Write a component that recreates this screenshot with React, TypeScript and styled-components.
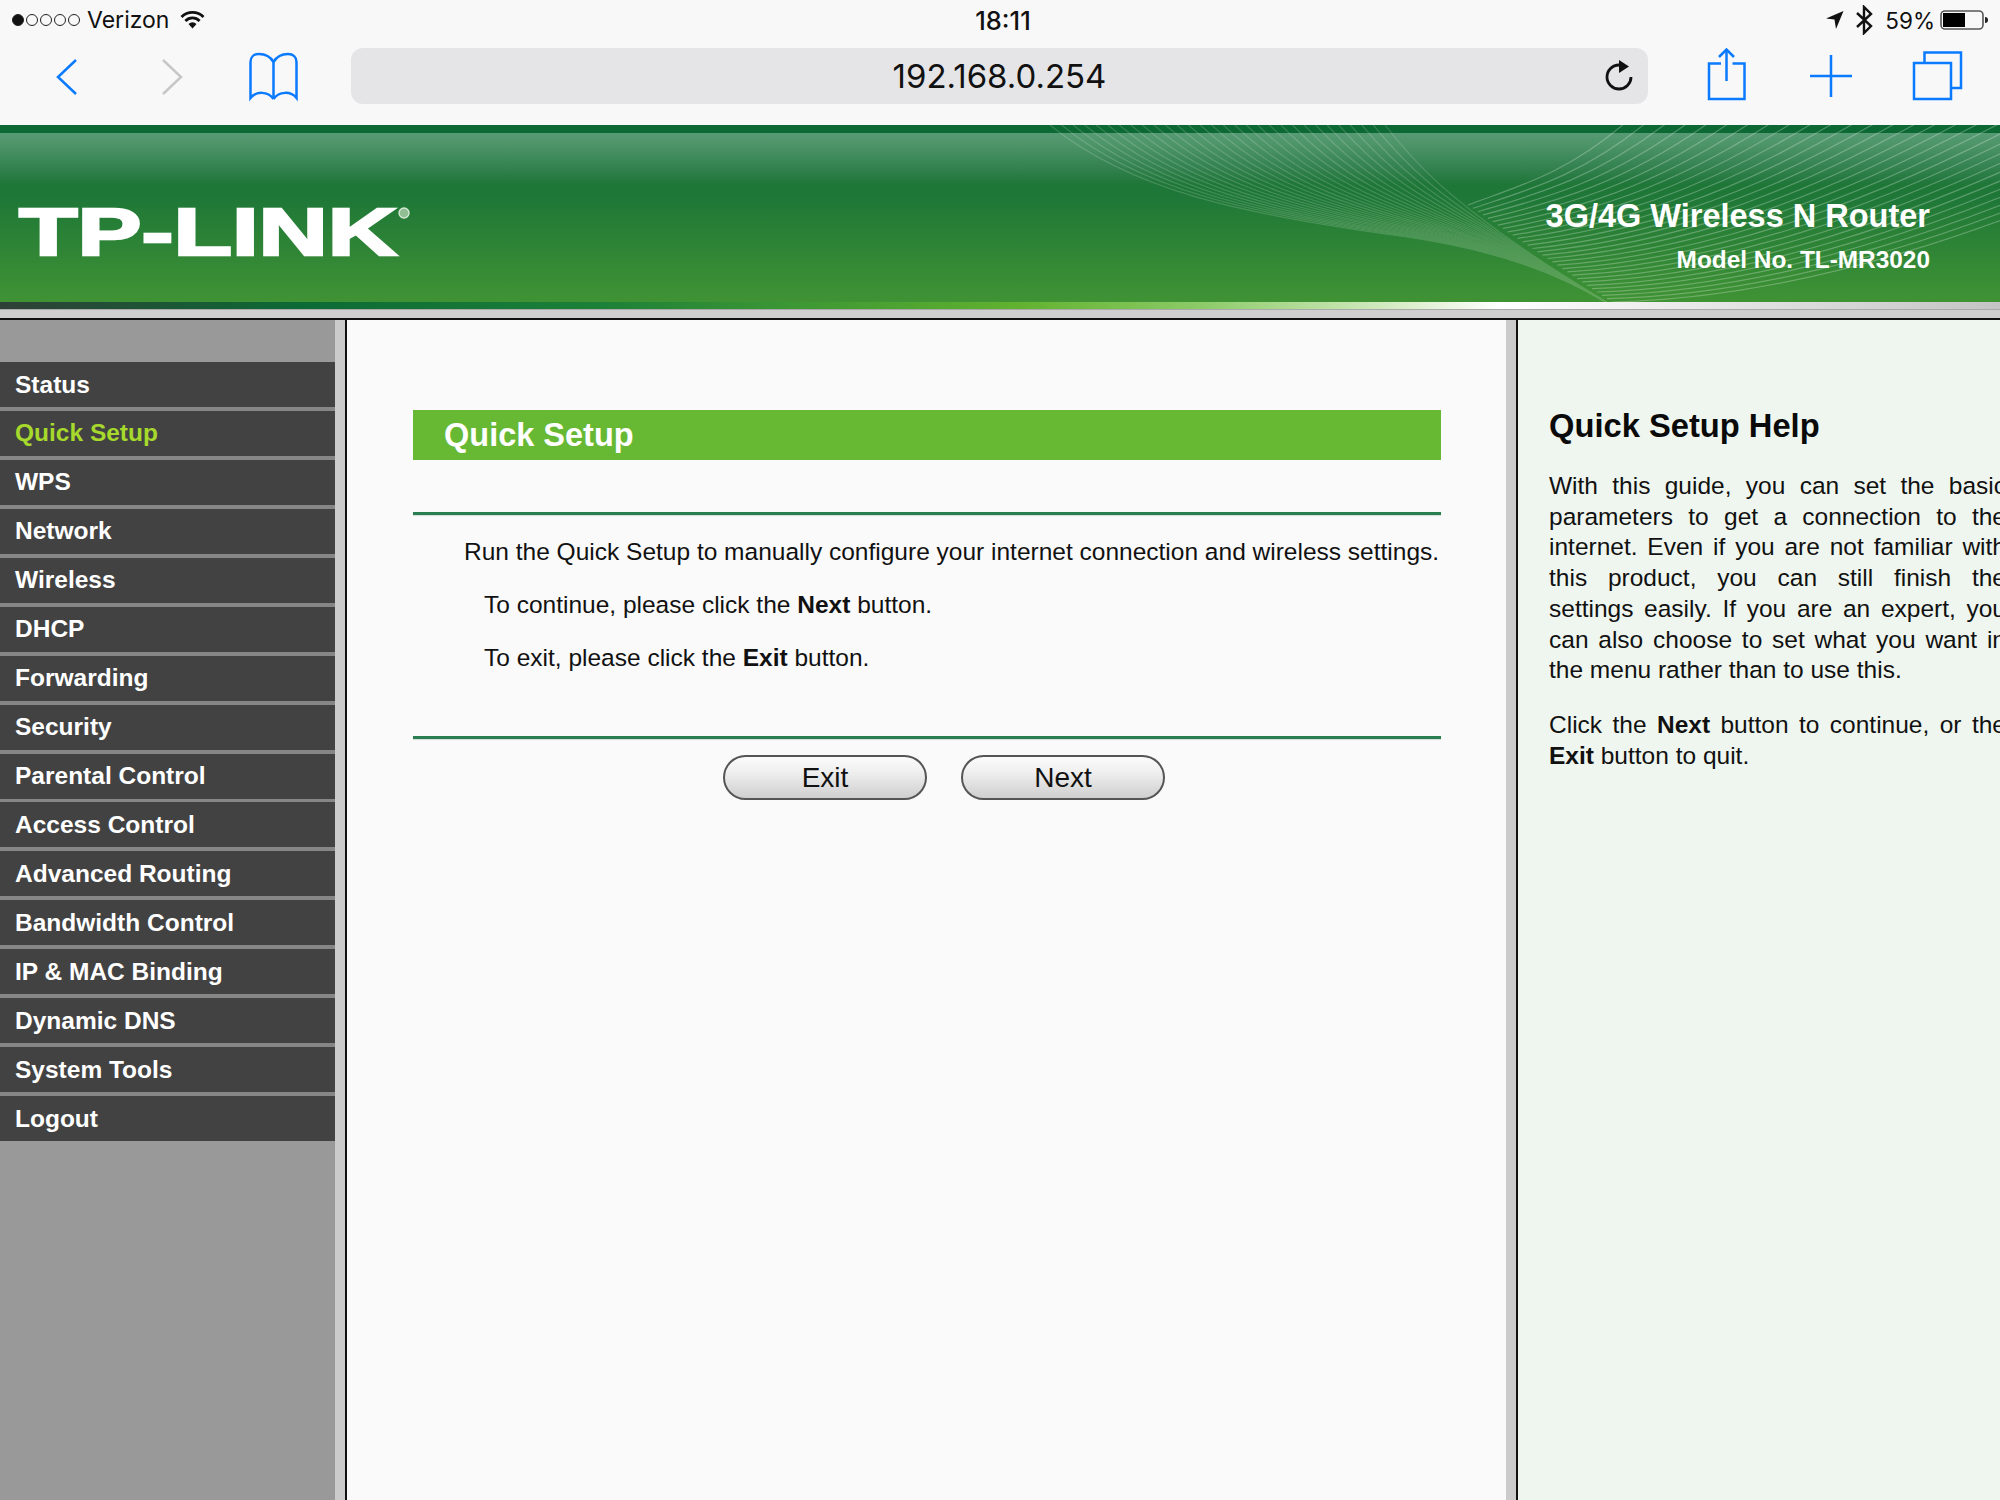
import React from "react";
import styled, { createGlobalStyle } from "styled-components";

const Global = createGlobalStyle`
  html, body { margin: 0; padding: 0; overflow: hidden; background: #f8f8f8; }
  * { box-sizing: border-box; }
`;

const Page = styled.div`
  width: 2000px;
  height: 1500px;
  overflow: hidden;
  display: flex;
  flex-direction: column;
  font-family: "Liberation Sans", Arial, sans-serif;
`;

const Chrome = styled.div`
  height: 125px;
  background: #f8f8f8;
  flex: none;
`;

const StatusBar = styled.div`
  height: 40px;
  padding: 0 10px 0 12px;
  display: grid;
  grid-template-columns: 1fr auto 1fr;
  align-items: center;
  font-family: Inter, "Open Sans", sans-serif;
  font-size: 23px;
  color: #111;
`;

const StatusLeft = styled.div`
  display: flex;
  align-items: center;
`;

const StatusRight = styled.div`
  display: flex;
  align-items: center;
  justify-content: flex-end;
`;

const Signal = styled.div`
  display: flex;
  gap: 2px;
  margin-right: 7px;
`;

const Dot = styled.span<{ $on?: boolean }>`
  width: 12px;
  height: 12px;
  border-radius: 50%;
  border: 1.5px solid #222;
  background: ${(p) => (p.$on ? "#111" : "transparent")};
`;

const Carrier = styled.span`
  margin-right: 11px;
`;

const Time = styled.div`
  font-size: 25.5px;
  font-weight: 500;
  margin-left: 4px;
`;

const Percent = styled.span`
  margin: 0 5px 0 11px;
  font-size: 22.5px;
`;

const BluetoothIcon = styled.svg`
  margin-left: 9px;
  fill: none;
  stroke: #111;
  stroke-width: 2.4;
`;

const Toolbar = styled.div`
  height: 85px;
  padding-bottom: 13px;
  display: flex;
  align-items: center;
`;

const ToolIcon = styled.svg<{ $gap: number; $color?: string }>`
  flex: none;
  margin-left: ${(p) => p.$gap}px;
  fill: none;
  stroke: ${(p) => p.$color ?? "#0a7aff"};
  stroke-width: 2.5;
`;

const Address = styled.div`
  position: relative;
  flex: none;
  width: 1297px;
  height: 56px;
  margin-left: 52px;
  border-radius: 12px;
  background: #e5e5e7;
  display: flex;
  align-items: center;
  justify-content: center;
  font-family: Inter, "Open Sans", sans-serif;
  font-size: 33px;
  color: #111;
`;

const Reload = styled.svg`
  position: absolute;
  right: 12px;
  top: 11px;
`;

const Banner = styled.header`
  position: relative;
  flex: none;
  height: 177px;
  overflow: hidden;
  background: linear-gradient(
    180deg,
    #0d6934 0,
    #0d6934 8px,
    #569a73 8px,
    #4d9469 20px,
    #2f7f4b 46px,
    #1e7637 60px,
    #1f7837 75px,
    #409334 177px
  );
  display: flex;
  justify-content: space-between;
  align-items: flex-start;
  color: #fff;
`;

const Waves = styled.svg`
  position: absolute;
  inset: 0;
  fill: none;
  stroke: #fff;
  stroke-width: 1.2;
`;

const Logo = styled.svg`
  position: relative;
  flex: none;
  margin: 65px 0 0 18px;
`;

const Product = styled.div`
  position: relative;
  margin: 71px 70px 0 0;
  text-align: right;
  font-weight: 700;
`;

const ProductName = styled.div`
  font-size: 32.5px;
  line-height: 40px;
`;

const ProductModel = styled.div`
  margin-top: 9px;
  font-size: 24.4px;
  line-height: 30px;
`;

const Rail = styled.div`
  flex: none;
  height: 7px;
  background: linear-gradient(
    90deg,
    #2f3f37 0,
    #0c6a35 300px,
    #1c8038 600px,
    #62b22f 1020px,
    #8ccb68 1200px,
    #d0e9bd 1380px,
    #ffffff 1500px,
    #e8e8e8 1700px,
    #c4c4c4 2000px
  );
`;

const Band = styled.div`
  flex: none;
  height: 9px;
  background: #cfcfcf;
  border-top: 1px solid #a9a9a9;
`;

const Body = styled.div`
  flex: 1;
  min-height: 0;
  display: flex;
  border-top: 2px solid #111;
`;

const Sidebar = styled.nav`
  flex: none;
  width: 335px;
  padding-top: 42px;
  background: #999;
  display: flex;
  flex-direction: column;
  gap: 3.95px;
`;

const MenuItem = styled.div<{ $active?: boolean }>`
  height: 45px;
  padding-left: 15px;
  display: flex;
  align-items: center;
  background: #424242;
  box-shadow: 0 4px 0 #868686;
  color: ${(p) => (p.$active ? "#a6d92c" : "#fff")};
  font-size: 24.5px;
  font-weight: 700;

  &:last-child {
    box-shadow: none;
  }
`;

const Gutter = styled.div`
  flex: none;
  width: 12px;
  background: #cbcbcb;
  border-right: 2px solid #111;
`;

const Main = styled.main`
  flex: none;
  width: 1159px;
  padding: 90px 65px 0 66px;
  background: #fafafa;
`;

const TitleBar = styled.div`
  height: 50px;
  padding-left: 31px;
  display: flex;
  align-items: center;
  background: #67b934;
  color: #fff;
  font-size: 32.5px;
  font-weight: 700;
`;

const Divider = styled.div<{ $top: number }>`
  height: 3px;
  margin-top: ${(p) => p.$top}px;
  background: #2b7d52;
  box-shadow: 0 1px 1px #cfe0d5;
`;

const Line = styled.p<{ $indent: number }>`
  margin: 0;
  padding-left: ${(p) => p.$indent}px;
  font-size: 24.5px;
  line-height: 53px;
  color: #111;
  white-space: nowrap;
`;

const Lines = styled.div`
  margin-top: 10px;
`;

const Buttons = styled.div`
  margin-top: 16px;
  padding-left: 310px;
  display: flex;
  gap: 34px;
`;

const Button = styled.button`
  width: 204px;
  height: 45px;
  padding: 0;
  border: 2px solid #555;
  border-radius: 23px;
  background: linear-gradient(180deg, #fbfbfb 0, #f0f0f0 35%, #cfcfcf 100%);
  color: #111;
  font-family: inherit;
  font-size: 28px;
`;

const Help = styled.aside`
  flex: 1;
  min-width: 0;
  overflow: hidden;
  padding: 84px 0 0 31px;
  background: #eff6ef;
  color: #111;
`;

const HelpTitle = styled.h2`
  margin: 0 0 23px;
  font-size: 32.7px;
  line-height: 44px;
  font-weight: 700;
  color: #0a0a0a;
`;

const HelpText = styled.p`
  width: 457px;
  margin: 0 0 24px;
  font-size: 24.5px;
  line-height: 30.7px;
  text-align: justify;
`;

const items = [
  "Status",
  "Quick Setup",
  "WPS",
  "Network",
  "Wireless",
  "DHCP",
  "Forwarding",
  "Security",
  "Parental Control",
  "Access Control",
  "Advanced Routing",
  "Bandwidth Control",
  "IP & MAC Binding",
  "Dynamic DNS",
  "System Tools",
  "Logout",
];

type Pt = [number, number];
const fanA: Pt[] = [[1050, 125], [1130, 190], [1240, 214], [1400, 236], [1500, 250], [1560, 275], [1606, 302]];
const fanB: Pt[] = [[1385, 125], [1420, 170], [1450, 195], [1490, 225], [1530, 255], [1570, 280], [1606, 302]];
const mix = (a: number, b: number, t: number) => a + (b - a) * t;

const fanOne = Array.from({ length: 30 }, (_, i) => {
  const t = i / 29;
  const p = fanA.map((a, k) => [mix(a[0], fanB[k][0], t), mix(a[1], fanB[k][1], t) - 125].map((n) => n.toFixed(1)).join(","));
  return `M${p[0]} C${p[1]} ${p[2]} ${p[3]} C${p[4]} ${p[5]} ${p[6]}`;
});

const fanTwo = Array.from({ length: 30 }, (_, i) => {
  const t = i / 29;
  const sx = mix(1468, 1612, t);
  const sy = mix(205, 302, t) - 125;
  const ex = mix(1625, 2230, t);
  const ey = -2;
  const dx = ex - sx;
  return `M${sx.toFixed(1)},${sy.toFixed(1)} C${(sx + dx * 0.3).toFixed(1)},${(sy - 18 + t * 14).toFixed(1)} ${(sx + dx * 0.62).toFixed(1)},${(sy * 0.62).toFixed(1)} ${ex.toFixed(1)},${ey}`;
});

export default function App() {
  return (
    <Page>
      <Global />
      <Chrome>
        <StatusBar>
          <StatusLeft>
            <Signal>
              <Dot $on />
              <Dot />
              <Dot />
              <Dot />
              <Dot />
            </Signal>
            <Carrier>Verizon</Carrier>
            <svg width="25" height="20" viewBox="0 0 25 20" fill="none" stroke="#111" strokeWidth="2.8">
              <path d="M1.5 7A15.5 15.5 0 0 1 23.5 7" />
              <path d="M5.4 10.9A10 10 0 0 1 19.6 10.9" />
              <path d="M12.5 18.5L8.5 13.9A6 6 0 0 1 16.5 13.9Z" fill="#111" stroke="none" />
            </svg>
          </StatusLeft>
          <Time>18:11</Time>
          <StatusRight>
            <svg width="20" height="24" viewBox="0 0 20 24">
              <path d="M1 10.5L18.5 3L11 21L9.5 11.5Z" fill="#111" />
            </svg>
            <BluetoothIcon width="20" height="30" viewBox="0 0 20 30">
              <path d="M3 8L17 21L10 28V2L17 9L3 22" />
            </BluetoothIcon>
            <Percent>59%</Percent>
            <svg width="50" height="20" viewBox="0 0 50 20">
              <rect x="1" y="1" width="42" height="18" rx="4" fill="none" stroke="#555" strokeWidth="1.6" />
              <rect x="3" y="3" width="22" height="14" fill="#000" />
              <path d="M45 7C47 7 48 8 48 10C48 12 47 13 45 13Z" fill="#222" />
            </svg>
          </StatusRight>
        </StatusBar>
        <Toolbar>
          <ToolIcon $gap={55} width="24" height="40" viewBox="0 0 24 40">
            <path d="M21 4L3 21L21 38" />
          </ToolIcon>
          <ToolIcon $gap={81} $color="#c7c7c7" width="24" height="40" viewBox="0 0 24 40">
            <path d="M3 4L21 21L3 38" />
          </ToolIcon>
          <ToolIcon $gap={64} width="51" height="52" viewBox="0 0 51 52">
            <path d="M25.5 12C22 6 16 4 11 4C6 4 2.5 7 2.5 12V48C8 41 20 41 25.5 49" />
            <path d="M25.5 12C29 6 35 4 40 4C45 4 48.5 7 48.5 12V48C43 41 31 41 25.5 49" />
            <path d="M25.5 12V49" />
          </ToolIcon>
          <Address>
            192.168.0.254
            <Reload width="34" height="34" viewBox="0 0 34 34" fill="none" stroke="#111" strokeWidth="2.8">
              <path d="M29 18A12 12 0 1 1 17 6" />
              <path d="M17 1L27 7.5L17 14Z" fill="#111" stroke="none" />
            </Reload>
          </Address>
          <ToolIcon $gap={56} width="45" height="56" viewBox="0 0 45 56">
            <path d="M17 15.5H5V51H40.5V15.5H28.5" />
            <path d="M22.5 1.5V33" />
            <path d="M15 9L22.5 1.5L30 9" />
          </ToolIcon>
          <ToolIcon $gap={59} width="46" height="46" viewBox="0 0 46 46">
            <path d="M23 2V44" />
            <path d="M2 23H44" />
          </ToolIcon>
          <ToolIcon $gap={56} width="54" height="54" viewBox="0 0 54 54">
            <rect x="4" y="14" width="37" height="36" />
            <path d="M14.5 14V3.5H51V39H41" />
          </ToolIcon>
        </Toolbar>
      </Chrome>

      <Banner>
        <Waves width="2000" height="177" viewBox="0 0 2000 177">
          <g opacity="0.16">
            {fanOne.map((d) => (
              <path key={d} d={d} />
            ))}
          </g>
          <g opacity="0.26">
            {fanTwo.map((d) => (
              <path key={d} d={d} />
            ))}
          </g>
        </Waves>
        <Logo width="410" height="80" viewBox="0 0 410 80">
          <text
            x="1"
            y="65"
            fontFamily="'Liberation Sans', Arial, sans-serif"
            fontWeight="700"
            fontSize="67"
            fill="#fff"
            stroke="#fff"
            strokeWidth="2.4"
            textLength="378"
            lengthAdjust="spacingAndGlyphs"
          >
            TP-LINK
          </text>
          <circle cx="386" cy="23" r="5" fill="#8fbf92" stroke="#d6e8d6" strokeWidth="1.4" />
        </Logo>
        <Product>
          <ProductName>3G/4G Wireless N Router</ProductName>
          <ProductModel>Model No. TL-MR3020</ProductModel>
        </Product>
      </Banner>
      <Rail />
      <Band />

      <Body>
        <Sidebar>
          {items.map((label) => (
            <MenuItem key={label} $active={label === "Quick Setup"}>
              {label}
            </MenuItem>
          ))}
        </Sidebar>
        <Gutter />
        <Main>
          <TitleBar>Quick Setup</TitleBar>
          <Divider $top={52} />
          <Lines>
            <Line $indent={51}>Run the Quick Setup to manually configure your internet connection and wireless settings.</Line>
            <Line $indent={71}>
              To continue, please click the <b>Next</b> button.
            </Line>
            <Line $indent={71}>
              To exit, please click the <b>Exit</b> button.
            </Line>
          </Lines>
          <Divider $top={52} />
          <Buttons>
            <Button>Exit</Button>
            <Button>Next</Button>
          </Buttons>
        </Main>
        <Gutter />
        <Help>
          <HelpTitle>Quick Setup Help</HelpTitle>
          <HelpText>
            With this guide, you can set the basic parameters to get a connection to the internet. Even if you are not
            familiar with this product, you can still finish the settings easily. If you are an expert, you can also
            choose to set what you want in the menu rather than to use this.
          </HelpText>
          <HelpText>
            Click the <b>Next</b> button to continue, or the <b>Exit</b> button to quit.
          </HelpText>
        </Help>
      </Body>
    </Page>
  );
}
